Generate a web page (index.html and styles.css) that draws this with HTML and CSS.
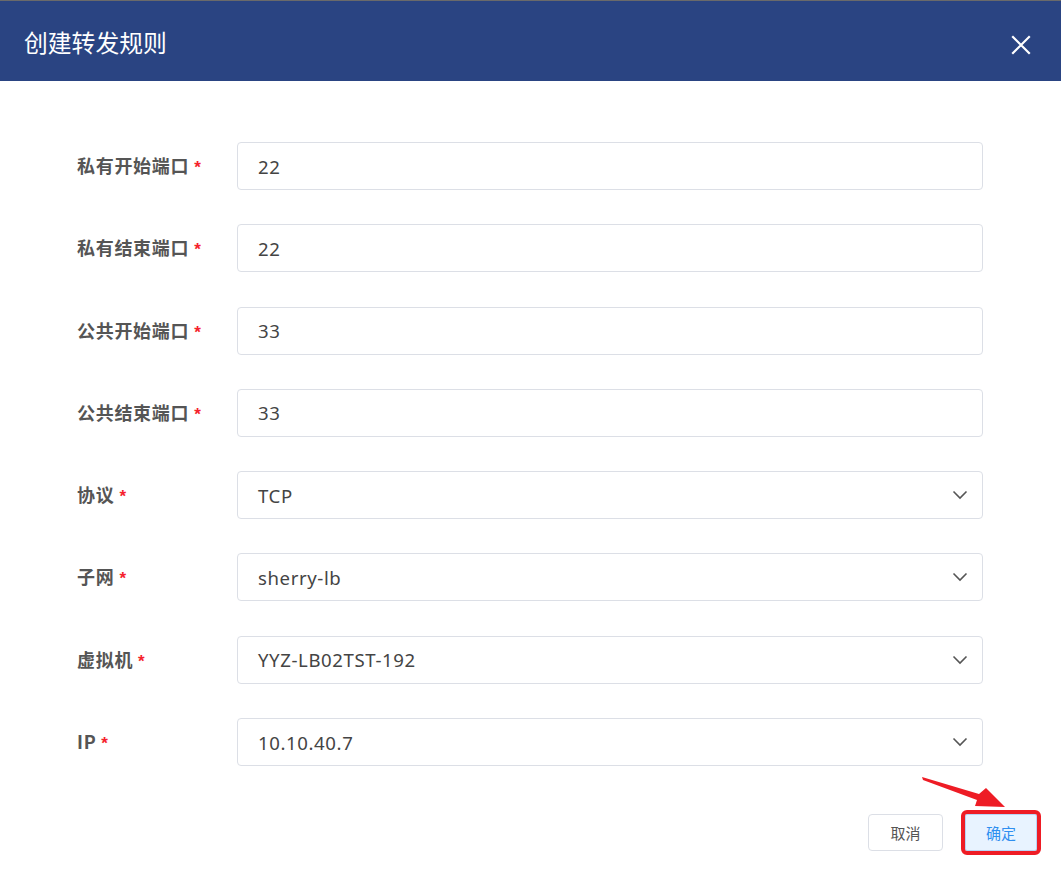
FILE: index.html
```html
<!DOCTYPE html>
<html lang="zh-CN">
<head>
<meta charset="utf-8">
<title>创建转发规则</title>
<link rel="stylesheet" href="styles.css">
</head>
<body>
<div class="dialog">
  <header class="dlg-head">
    <h1 class="dlg-title">创建转发规则</h1>
    <button class="dlg-close" aria-label="关闭">
      <svg width="20" height="20" viewBox="0 0 20 20"><path d="M2 2L18 18M18 2L2 18" stroke="#fff" stroke-width="2.2" stroke-linecap="square" fill="none"/></svg>
    </button>
  </header>
  <form class="form">
    <div class="row"><label class="lbl">私有开始端口<span class="req">*</span></label><div class="field"><span class="val">22</span></div></div>
    <div class="row"><label class="lbl">私有结束端口<span class="req">*</span></label><div class="field"><span class="val">22</span></div></div>
    <div class="row"><label class="lbl">公共开始端口<span class="req">*</span></label><div class="field"><span class="val">33</span></div></div>
    <div class="row"><label class="lbl">公共结束端口<span class="req">*</span></label><div class="field"><span class="val">33</span></div></div>
    <div class="row"><label class="lbl">协议<span class="req">*</span></label><div class="field select"><span class="val">TCP</span><svg class="chev" width="16" height="10" viewBox="0 0 16 10"><path d="M1.5 1.5L8 8L14.5 1.5" stroke="#555" stroke-width="1.6" fill="none"/></svg></div></div>
    <div class="row"><label class="lbl">子网<span class="req">*</span></label><div class="field select"><span class="val">sherry-lb</span><svg class="chev" width="16" height="10" viewBox="0 0 16 10"><path d="M1.5 1.5L8 8L14.5 1.5" stroke="#555" stroke-width="1.6" fill="none"/></svg></div></div>
    <div class="row"><label class="lbl">虚拟机<span class="req">*</span></label><div class="field select"><span class="val">YYZ-LB02TST-192</span><svg class="chev" width="16" height="10" viewBox="0 0 16 10"><path d="M1.5 1.5L8 8L14.5 1.5" stroke="#555" stroke-width="1.6" fill="none"/></svg></div></div>
    <div class="row"><label class="lbl">IP<span class="req">*</span></label><div class="field select"><span class="val">10.10.40.7</span><svg class="chev" width="16" height="10" viewBox="0 0 16 10"><path d="M1.5 1.5L8 8L14.5 1.5" stroke="#555" stroke-width="1.6" fill="none"/></svg></div></div>
  </form>
  <footer class="dlg-foot">
    <button class="btn">取消</button>
    <div class="ok-wrap">
      <button class="btn btn-ok">确定</button>
      <svg class="arrow" width="90" height="50" viewBox="0 0 90 50"><path d="M1 3 L58 20 L65 14 L84 33 L54 32 L56 26 L2 6 Z" fill="#ee1c25"/></svg>
    </div>
  </footer>
</div>
</body>
</html>
```
FILE: styles.css
```css
html, body { margin: 0; padding: 0; background: #fff; }
body { font-family: "Noto Sans", "Noto Sans CJK SC", sans-serif; }
.dialog { width: 1061px; height: 875px; position: relative; }
.dlg-head {
  height: 80px;
  border-top: 1px solid #6a6a6a;
  background: #2a4482;
  display: flex;
  align-items: center;
  justify-content: space-between;
  padding: 0 30px 0 24px;
  box-sizing: content-box;
}
.dlg-title {
  margin: 0;
  color: #fff;
  font-family: "Noto Sans CJK SC", sans-serif;
  font-weight: 400;
  font-size: 23.8px;
  line-height: 1;
  padding-top: 1px;
}
.dlg-close {
  background: none; border: 0; padding: 0; margin-top: 7px;
  width: 20px; height: 20px; display: flex;
}
.form {
  padding: 61px 78px 0 77px;
  display: flex;
  flex-direction: column;
  gap: 34.3px;
}
.row { display: flex; align-items: center; height: 48px; }
.lbl {
  width: 160px;
  flex: none;
  font-family: "Noto Sans CJK SC", sans-serif;
  font-weight: 700;
  font-size: 18px;
  color: #555;
  letter-spacing: 0.7px;
  margin-top: -2px;
}
.req { color: #f5222d; margin-left: 5px; font-family: "Liberation Sans", sans-serif; font-weight: 700; font-size: 17px; }
.field {
  flex: 1;
  height: 48px;
  box-sizing: border-box;
  border: 1px solid #dcdfe6;
  border-radius: 4px;
  display: flex;
  align-items: center;
  padding: 0 14px 0 20px;
}
.val { font-size: 18.6px; color: #444; letter-spacing: 0.6px; flex: 1; }
.chev { flex: none; }
.dlg-foot {
  position: absolute;
  right: 24px;
  top: 814px;
  display: flex;
  gap: 22px;
}
.btn {
  height: 37px;
  width: 75px;
  border: 1px solid #dcdfe6;
  border-radius: 4px;
  background: #fff;
  font-family: "Noto Sans CJK SC", sans-serif;
  font-size: 15px;
  color: #555;
  padding: 0;
}
.ok-wrap { position: relative; }
.btn-ok {
  width: 72px;
  background: #e8f3ff;
  border-color: #b7d4f5;
  color: #2f8ff0;
  border-radius: 2px;
  outline: 4px solid #ee1c25;
  outline-offset: 0;
}
.arrow { position: absolute; left: -44px; top: -40px; }
```
